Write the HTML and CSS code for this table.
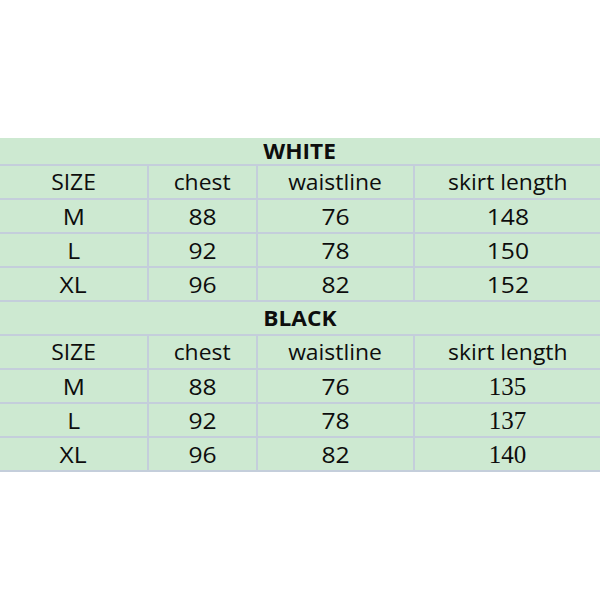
FILE: index.html
```html
<!DOCTYPE html>
<html>
<head>
<meta charset="utf-8">
<link rel="stylesheet" href="styles.css">
</head>
<body>
<div class="sheet">
  <div class="title first"><span>WHITE</span></div>
  <div class="c head"><span>SIZE</span></div><div class="c head"><span>chest</span></div><div class="c head"><span>waistline</span></div><div class="c head"><span>skirt length</span></div>
  <div class="c"><span>M</span></div><div class="c"><span>88</span></div><div class="c"><span>76</span></div><div class="c"><span>148</span></div>
  <div class="c"><span>L</span></div><div class="c"><span>92</span></div><div class="c"><span>78</span></div><div class="c"><span>150</span></div>
  <div class="c"><span>XL</span></div><div class="c"><span>96</span></div><div class="c"><span>82</span></div><div class="c"><span>152</span></div>
  <div class="title"><span>BLACK</span></div>
  <div class="c head"><span>SIZE</span></div><div class="c head"><span>chest</span></div><div class="c head"><span>waistline</span></div><div class="c head"><span>skirt length</span></div>
  <div class="c"><span>M</span></div><div class="c"><span>88</span></div><div class="c"><span>76</span></div><div class="c serif"><span>135</span></div>
  <div class="c"><span>L</span></div><div class="c"><span>92</span></div><div class="c"><span>78</span></div><div class="c serif"><span>137</span></div>
  <div class="c"><span>XL</span></div><div class="c"><span>96</span></div><div class="c"><span>82</span></div><div class="c serif"><span>140</span></div>
</div>
</body>
</html>
```
FILE: styles.css
```css
html, body {
  margin: 0;
  padding: 0;
  background: #ffffff;
}
body {
  padding-top: 138px;
  font-family: "Open Sans", "Liberation Sans", sans-serif;
  color: #0d0d0d;
}
.sheet {
  width: 600px;
  display: grid;
  grid-template-columns: 147px 107px 155px 185px;
  grid-template-rows: 26px repeat(4, 32px) 32px repeat(4, 32px);
  column-gap: 2px;
  row-gap: 2px;
  background: #c4cedb;
  padding-bottom: 2px;
}
.c, .title {
  background: #cde9d1;
  display: flex;
  align-items: center;
  justify-content: center;
  line-height: 1;
  white-space: nowrap;
}
.c span, .title span {
  display: inline-block;
}
.c {
  font-size: 22px;
}
.c span {
  transform: scaleX(1.12);
}
.c.head {
  font-size: 21px;
}
.c.head span {
  transform: scaleX(1.09);
}
.title {
  grid-column: 1 / -1;
  font-weight: 700;
  font-size: 21px;
}
.title span {
  transform: scaleX(1.08);
}
.first {
  padding-top: 1px;
}
.c.serif {
  font-family: "Liberation Serif", serif;
  font-size: 25px;
}
.c.serif span {
  transform: none;
}
```
